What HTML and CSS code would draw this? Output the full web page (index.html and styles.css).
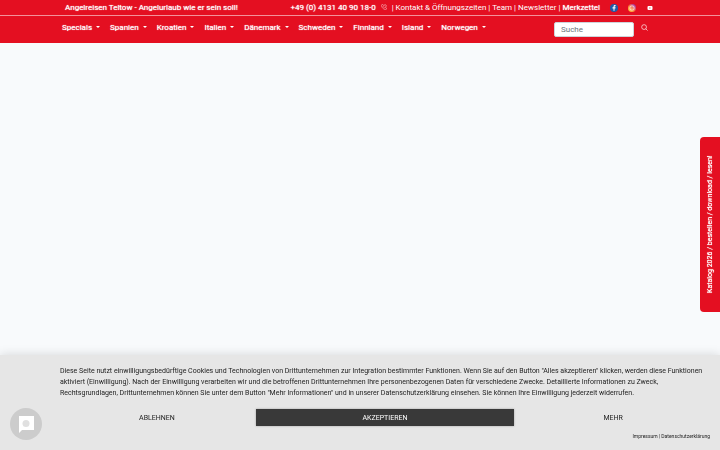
FILE: index.html
```html
<!DOCTYPE html>
<html lang="de">
<head>
    <meta charset="UTF-8">
    <meta name="viewport" content="width=device-width, initial-scale=1.0">
    <title>Angelreisen Teltow</title>
    <link rel="stylesheet" href="styles.css">
</head>
<body>
    <header>
        <div class="topbar">
            <strong class="slogan">Angelreisen Teltow - Angelurlaub wie er sein soll!</strong>
            <div class="contact">
                <a class="phone" href="tel:+494131409018">+49 (0) 4131 40 90 18-0</a>
                <svg class="phone-icon" viewBox="0 0 16 16" aria-hidden="true">
                    <path d="M3 1.5 5 1l2 4-1.500 1.500c.8 1.700 2.300 3.200 4 4L11 9l4 2-.5 2.500c-.3 1-1 1.500-2 1.500C6.500 14.500 1.500 9.500 1 3.500c0-1 1-1.800 2-2zM9 1c3.500 0 6 2.500 6 6M9 4c2 0 3 1 3 3" fill="none" stroke="currentColor" stroke-width="1.400"/>
                </svg>
                <span>| <a href="#">Kontakt &amp; Öffnungszeiten</a> | <a href="#">Team</a> | <a href="#">Newsletter</a> | <a class="wishlist" href="#">Merkzettel</a></span>
            </div>
            <div class="social">
                <a href="#" aria-label="Facebook">
                    <svg viewBox="0 0 16 16">
                        <circle cx="8" cy="8" r="8" fill="#1f5ba8"/>
                        <path d="M7 13.500V9H5V6.500h2V5c0-2 1.200-3 3-3h1.200v2.400h-1c-.8 0-1.200.4-1.200 1v1.100h2.200L10.800 9H9v4.500z" fill="#fff"/>
                    </svg>
                </a>
                <a href="#" aria-label="Instagram">
                    <svg viewBox="0 0 16 16">
                        <defs>
                            <linearGradient id="insta" x1="0" y1="1" x2="1" y2="0">
                                <stop offset="0.100" stop-color="#ffd03c"/>
                                <stop offset="0.500" stop-color="#f8703c"/>
                                <stop offset="0.900" stop-color="#9a37c5"/>
                            </linearGradient>
                        </defs>
                        <circle cx="8" cy="8" r="8" fill="url(#insta)"/>
                        <rect x="4" y="4" width="8" height="8" rx="2" fill="none" stroke="#fff" stroke-width="1.500"/>
                        <circle cx="8" cy="8" r="1" fill="#fff"/>
                    </svg>
                </a>
                <a href="#" aria-label="YouTube">
                    <svg viewBox="0 0 16 16">
                        <rect x="3" y="4" width="10" height="8" rx="2" fill="#fff"/>
                        <path d="M7 6.300v3.400L9.800 8z" fill="#e40f21"/>
                    </svg>
                </a>
            </div>
        </div>
        <div class="mainbar">
            <nav>
                <a href="#">Specials</a>
                <a href="#">Spanien</a>
                <a href="#">Kroatien</a>
                <a href="#">Italien</a>
                <a href="#">Dänemark</a>
                <a href="#">Schweden</a>
                <a href="#">Finnland</a>
                <a href="#">Island</a>
                <a href="#">Norwegen</a>
            </nav>
            <form class="search">
                <input type="text" placeholder="Suche" aria-label="Suche">
                <button type="submit" aria-label="Suchen">
                    <svg viewBox="0 0 16 16">
                        <circle cx="7" cy="7" r="5.500" fill="none" stroke="currentColor" stroke-width="1.500"/>
                        <path d="M11 11l4 4" stroke="currentColor" stroke-width="1.500"/>
                    </svg>
                </button>
            </form>
        </div>
    </header>

    <a class="catalog" href="#">Katalog 2026 / bestellen / download / lesen!</a>

    <section class="consent">
        <p>Diese Seite nutzt einwilligungsbedürftige Cookies und Technologien von Drittunternehmen zur Integration bestimmter Funktionen. Wenn Sie auf den Button "Alles akzeptieren" klicken, werden diese Funktionen aktiviert (Einwilligung). Nach der Einwilligung verarbeiten wir und die betroffenen Drittunternehmen Ihre personenbezogenen Daten für verschiedene Zwecke. Detaillierte Informationen zu Zweck, Rechtsgrundlagen, Drittunternehmen können Sie unter dem Button "Mehr Informationen" und in unserer Datenschutzerklärung einsehen. Sie können Ihre Einwilligung jederzeit widerrufen.</p>
        <div class="consent-buttons">
            <button type="button">ABLEHNEN</button>
            <button type="button" class="accept">AKZEPTIEREN</button>
            <button type="button">MEHR</button>
        </div>
        <div class="consent-links"><a href="#">Impressum</a> | <a href="#">Datenschutzerklärung</a></div>
    </section>

    <button type="button" class="privacy" aria-label="Datenschutzeinstellungen">
        <svg viewBox="0 0 32 32">
            <path d="M9 8h15v14H12l-3 3z" fill="#fff"/>
            <circle cx="16" cy="15.500" r="3.500" fill="#e0e0e0"/>
        </svg>
    </button>
</body>
</html>
```
FILE: styles.css
```css
* {
    box-sizing: border-box;
}

body {
    margin: 0;
    min-height: 100vh;
    background-color: #f8fafc;
    color: #222222;
    font-family: Roboto, "Liberation Sans", sans-serif;
    font-size: 8px;
}

a {
    color: inherit;
    text-decoration: none;
}

button {
    border: none;
    padding: 0;
    background: none;
    color: inherit;
    font-family: inherit;
    cursor: pointer;
}

header {
    background-color: #e40f21;
    color: #ffffff;
}

.topbar {
    display: flex;
    align-items: center;
    height: 16px;
    padding: 0 66px 1px 65px;
    border-bottom: 1px solid #f3929a;
}

.slogan,
.phone,
.wishlist,
nav a,
.catalog {
    font-weight: 400;
    text-shadow: 0 0 1px currentColor;
}

.contact {
    display: flex;
    align-items: center;
    gap: 5px;
    margin-left: auto;
}

.phone-icon {
    width: 6px;
    height: 6px;
    opacity: 0.800;
}

.social {
    display: flex;
    gap: 10px;
    margin-left: 10px;
    padding-top: 1px;
}

.social a,
.social svg {
    display: block;
    width: 8px;
    height: 8px;
}

.mainbar {
    display: flex;
    align-items: flex-start;
    justify-content: space-between;
    height: 27px;
    padding: 6px 72px 0 62px;
}

nav {
    display: flex;
    gap: 10px;
    line-height: 12px;
}

nav a::after {
    content: "";
    display: inline-block;
    margin-left: 4px;
    border: 2px solid transparent;
    border-top-color: #ffffff;
    border-bottom: 0;
    vertical-align: 2px;
}

.search {
    display: flex;
    align-items: flex-start;
    gap: 7px;
}

.search input {
    width: 80px;
    height: 15px;
    padding: 0 6px;
    border: 1px solid #ced4da;
    border-radius: 2px;
    font-family: inherit;
    font-size: 8px;
}

.search input::placeholder {
    color: #6c757d;
}

.search button {
    padding-top: 2px;
}

.search svg {
    display: block;
    width: 7px;
    height: 7px;
}

.catalog {
    position: fixed;
    top: 50%;
    right: 0;
    width: 20px;
    height: 175px;
    margin-top: -88px;
    border-radius: 0 4px 4px 0;
    background-color: #e40f21;
    color: #ffffff;
    font-size: 7px;
    line-height: 20px;
    text-align: center;
    writing-mode: vertical-rl;
    transform: rotate(180deg);
}

.consent {
    position: fixed;
    right: 0;
    bottom: 0;
    left: 0;
    padding: 11px 10px 10px 60px;
    background-color: #e6e6e6;
    box-shadow: 0 0 10px rgba(0, 0, 0, 0.150);
}

.consent p {
    margin: 0 0 10px;
    font-size: 7px;
    line-height: 11px;
}

.consent-buttons {
    display: grid;
    grid-template-columns: 3fr 4fr 3fr;
    gap: 2px;
}

.consent-buttons button {
    height: 17px;
    font-size: 7px;
}

.consent-buttons .accept {
    background-color: #393939;
    color: #ffffff;
    box-shadow: 0 0 2px rgba(0, 0, 0, 0.300);
}

.consent-links {
    margin-top: 6px;
    font-size: 5px;
    line-height: 8px;
    text-align: right;
}

.privacy {
    position: fixed;
    bottom: 10px;
    left: 10px;
    width: 32px;
    height: 32px;
    border-radius: 50%;
    background-color: #cccccc;
}

.privacy svg {
    display: block;
    width: 32px;
    height: 32px;
}
```
